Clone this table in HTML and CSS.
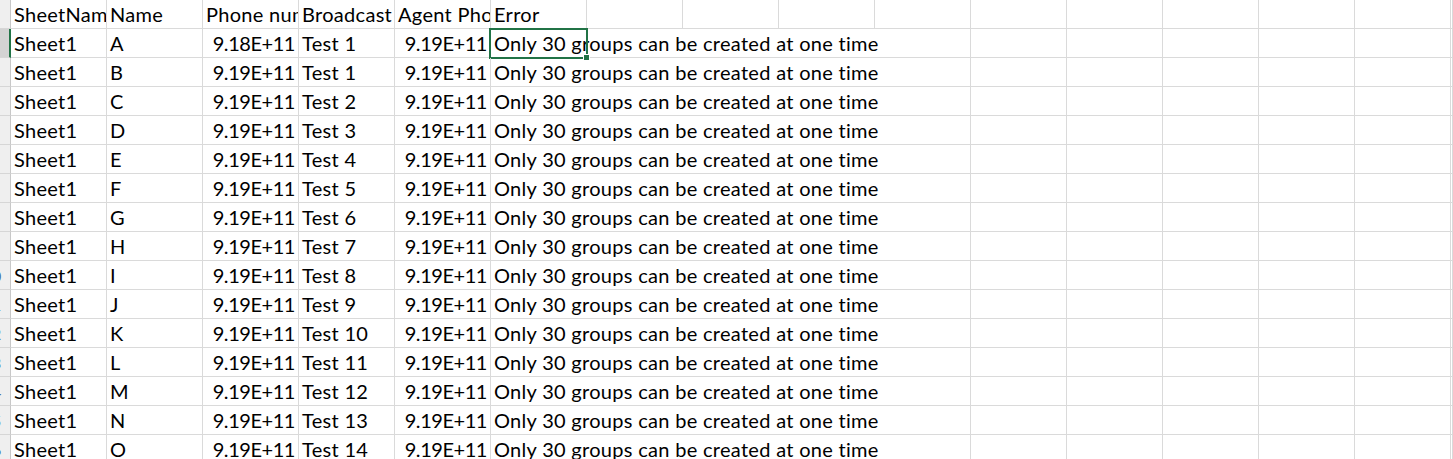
FILE: index.html
```html
<!DOCTYPE html>
<html>
<head>
<meta charset="utf-8">
<title>Sheet</title>
<link rel="stylesheet" href="styles.css">
</head>
<body>
<div class="sheet">
  <div class="rh"><span class="rn">1</span></div>
  <div class="c clip">SheetName</div>
  <div class="c clip">Name</div>
  <div class="c clip">Phone number</div>
  <div class="c clip">Broadcast</div>
  <div class="c clip">Agent Phone</div>
  <div class="c clip">Error</div>
  <div class="c"></div><div class="c"></div><div class="c"></div><div class="c"></div><div class="c"></div><div class="c"></div><div class="c"></div><div class="c"></div><div class="c"></div><div class="c"></div>

  <div class="rh sel-row"><span class="rn">2</span></div>
  <div class="c">Sheet1</div><div class="c">A</div><div class="c num">9.18E+11</div><div class="c">Test 1</div><div class="c num">9.19E+11</div>
  <div class="c err active">Only 30 groups can be created at one time<span class="sel"><span class="handle"></span></span></div>
  <div class="c"></div><div class="c"></div><div class="c"></div><div class="c"></div><div class="c"></div><div class="c"></div>

  <div class="rh"><span class="rn">3</span></div>
  <div class="c">Sheet1</div><div class="c">B</div><div class="c num">9.19E+11</div><div class="c">Test 1</div><div class="c num">9.19E+11</div>
  <div class="c err">Only 30 groups can be created at one time</div>
  <div class="c"></div><div class="c"></div><div class="c"></div><div class="c"></div><div class="c"></div><div class="c"></div>

  <div class="rh"><span class="rn">4</span></div>
  <div class="c">Sheet1</div><div class="c">C</div><div class="c num">9.19E+11</div><div class="c">Test 2</div><div class="c num">9.19E+11</div>
  <div class="c err">Only 30 groups can be created at one time</div>
  <div class="c"></div><div class="c"></div><div class="c"></div><div class="c"></div><div class="c"></div><div class="c"></div>

  <div class="rh"><span class="rn">5</span></div>
  <div class="c">Sheet1</div><div class="c">D</div><div class="c num">9.19E+11</div><div class="c">Test 3</div><div class="c num">9.19E+11</div>
  <div class="c err">Only 30 groups can be created at one time</div>
  <div class="c"></div><div class="c"></div><div class="c"></div><div class="c"></div><div class="c"></div><div class="c"></div>

  <div class="rh"><span class="rn">6</span></div>
  <div class="c">Sheet1</div><div class="c">E</div><div class="c num">9.19E+11</div><div class="c">Test 4</div><div class="c num">9.19E+11</div>
  <div class="c err">Only 30 groups can be created at one time</div>
  <div class="c"></div><div class="c"></div><div class="c"></div><div class="c"></div><div class="c"></div><div class="c"></div>

  <div class="rh"><span class="rn">7</span></div>
  <div class="c">Sheet1</div><div class="c">F</div><div class="c num">9.19E+11</div><div class="c">Test 5</div><div class="c num">9.19E+11</div>
  <div class="c err">Only 30 groups can be created at one time</div>
  <div class="c"></div><div class="c"></div><div class="c"></div><div class="c"></div><div class="c"></div><div class="c"></div>

  <div class="rh"><span class="rn">8</span></div>
  <div class="c">Sheet1</div><div class="c">G</div><div class="c num">9.19E+11</div><div class="c">Test 6</div><div class="c num">9.19E+11</div>
  <div class="c err">Only 30 groups can be created at one time</div>
  <div class="c"></div><div class="c"></div><div class="c"></div><div class="c"></div><div class="c"></div><div class="c"></div>

  <div class="rh"><span class="rn">9</span></div>
  <div class="c">Sheet1</div><div class="c">H</div><div class="c num">9.19E+11</div><div class="c">Test 7</div><div class="c num">9.19E+11</div>
  <div class="c err">Only 30 groups can be created at one time</div>
  <div class="c"></div><div class="c"></div><div class="c"></div><div class="c"></div><div class="c"></div><div class="c"></div>

  <div class="rh"><span class="rn">10</span></div>
  <div class="c">Sheet1</div><div class="c">I</div><div class="c num">9.19E+11</div><div class="c">Test 8</div><div class="c num">9.19E+11</div>
  <div class="c err">Only 30 groups can be created at one time</div>
  <div class="c"></div><div class="c"></div><div class="c"></div><div class="c"></div><div class="c"></div><div class="c"></div>

  <div class="rh"><span class="rn">11</span></div>
  <div class="c">Sheet1</div><div class="c">J</div><div class="c num">9.19E+11</div><div class="c">Test 9</div><div class="c num">9.19E+11</div>
  <div class="c err">Only 30 groups can be created at one time</div>
  <div class="c"></div><div class="c"></div><div class="c"></div><div class="c"></div><div class="c"></div><div class="c"></div>

  <div class="rh"><span class="rn">12</span></div>
  <div class="c">Sheet1</div><div class="c">K</div><div class="c num">9.19E+11</div><div class="c">Test 10</div><div class="c num">9.19E+11</div>
  <div class="c err">Only 30 groups can be created at one time</div>
  <div class="c"></div><div class="c"></div><div class="c"></div><div class="c"></div><div class="c"></div><div class="c"></div>

  <div class="rh"><span class="rn">13</span></div>
  <div class="c">Sheet1</div><div class="c">L</div><div class="c num">9.19E+11</div><div class="c">Test 11</div><div class="c num">9.19E+11</div>
  <div class="c err">Only 30 groups can be created at one time</div>
  <div class="c"></div><div class="c"></div><div class="c"></div><div class="c"></div><div class="c"></div><div class="c"></div>

  <div class="rh"><span class="rn">14</span></div>
  <div class="c">Sheet1</div><div class="c">M</div><div class="c num">9.19E+11</div><div class="c">Test 12</div><div class="c num">9.19E+11</div>
  <div class="c err">Only 30 groups can be created at one time</div>
  <div class="c"></div><div class="c"></div><div class="c"></div><div class="c"></div><div class="c"></div><div class="c"></div>

  <div class="rh"><span class="rn">15</span></div>
  <div class="c">Sheet1</div><div class="c">N</div><div class="c num">9.19E+11</div><div class="c">Test 13</div><div class="c num">9.19E+11</div>
  <div class="c err">Only 30 groups can be created at one time</div>
  <div class="c"></div><div class="c"></div><div class="c"></div><div class="c"></div><div class="c"></div><div class="c"></div>

  <div class="rh"><span class="rn">16</span></div>
  <div class="c">Sheet1</div><div class="c">O</div><div class="c num">9.19E+11</div><div class="c">Test 14</div><div class="c num">9.19E+11</div>
  <div class="c err">Only 30 groups can be created at one time</div>
  <div class="c"></div><div class="c"></div><div class="c"></div><div class="c"></div><div class="c"></div><div class="c"></div>
</div>
</body>
</html>
```
FILE: styles.css
```css
html, body {
  margin: 0;
  padding: 0;
  background: #ffffff;
  overflow: hidden;
}

.sheet {
  display: grid;
  grid-template-columns: 11px repeat(15, 96px) minmax(0, 1fr);
  grid-template-rows: 29px;
  grid-auto-rows: 29px;
  font-family: "Lato", "Liberation Sans", sans-serif;
  font-size: 20px;
  letter-spacing: 0.3px;
  color: #000000;
}

.c {
  box-sizing: border-box;
  min-width: 0;
  border-right: 1px solid #dadada;
  border-bottom: 1px solid #dadada;
  padding: 2px 3px 0 3px;
  line-height: 24px;
  white-space: nowrap;
  position: relative;
}

.c:empty {
  padding: 0;
}

.clip {
  overflow: hidden;
}

.num {
  text-align: right;
  padding-right: 3px;
  letter-spacing: -0.45px;
}

.err {
  grid-column: span 5;
}

.rh {
  box-sizing: border-box;
  background: #efefef;
  border-right: 1px solid #c8c8c8;
  border-bottom: 1px solid #d6d6d6;
  display: flex;
  justify-content: flex-end;
  align-items: center;
  padding-right: 8px;
  overflow: hidden;
  letter-spacing: 0;
}

.rh.sel-row {
  background: #d3d3d3;
  border-right: 2px solid #217346;
  padding-right: 7px;
}

.rn {
  flex: 0 0 20px;
  width: 20px;
  text-align: center;
  font-size: 16px;
  color: #4a6f9c;
}

.sel {
  position: absolute;
  left: -2px;
  top: -1px;
  width: 99px;
  height: 31px;
  box-sizing: border-box;
  border: 2px solid #217346;
  pointer-events: none;
}

.handle {
  position: absolute;
  right: -4px;
  bottom: -4px;
  width: 5px;
  height: 5px;
  background: #217346;
  border: 1px solid #ffffff;
}
```
